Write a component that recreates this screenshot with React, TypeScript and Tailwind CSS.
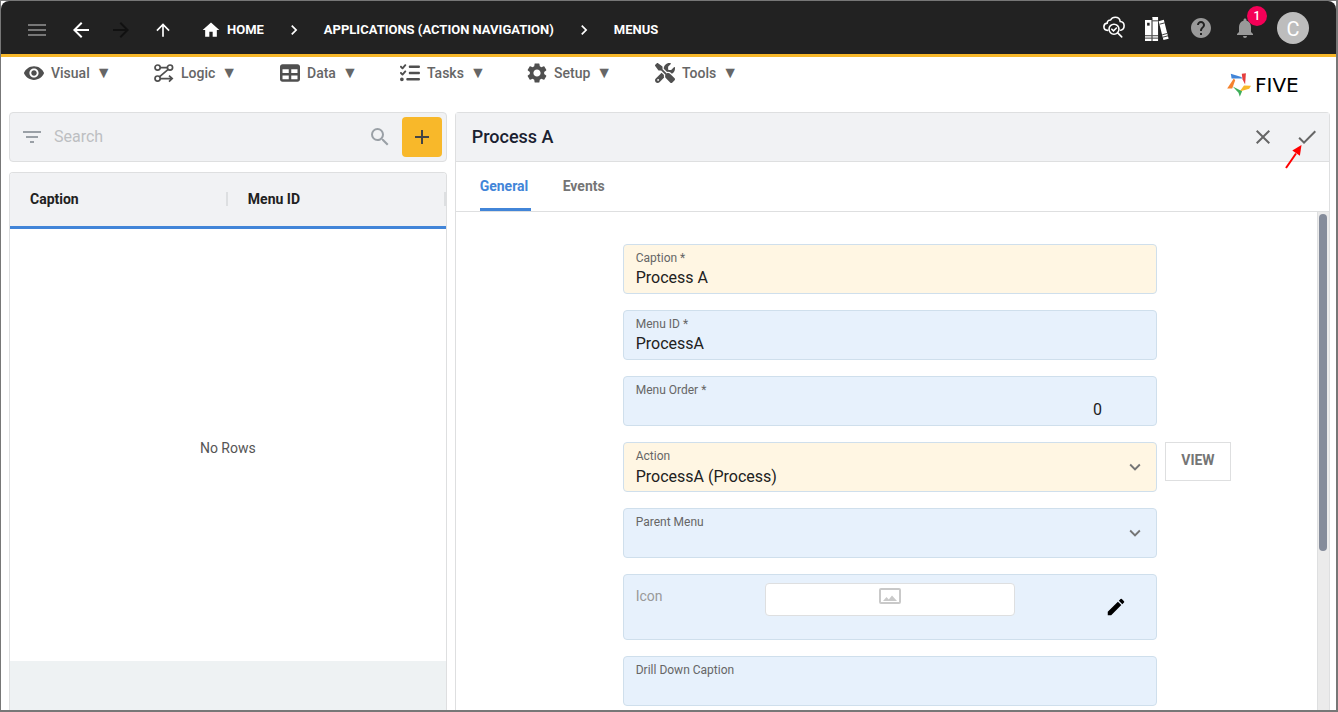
import { useState } from 'react'
import type { ReactNode } from 'react'
import {
  MdAdd,
  MdArrowBack,
  MdArrowForward,
  MdArrowUpward,
  MdCheck,
  MdChevronRight,
  MdClose,
  MdEdit,
  MdFilterList,
  MdHelp,
  MdHome,
  MdKeyboardArrowDown,
  MdMenu,
  MdNotifications,
  MdSearch,
  MdSettings,
  MdVisibility,
} from 'react-icons/md'
import { FaListCheck, FaScrewdriverWrench, FaTable } from 'react-icons/fa6'

const MENUS: { label: string; width: string; icon: ReactNode }[] = [
  { label: 'Visual', width: 'w-[130px]', icon: <MdVisibility size={22} /> },
  { label: 'Logic', width: 'w-[126px]', icon: <LogicIcon /> },
  { label: 'Data', width: 'w-[120px]', icon: <FaTable size={20} /> },
  { label: 'Tasks', width: 'w-[127px]', icon: <FaListCheck size={20} /> },
  { label: 'Setup', width: 'w-[128px]', icon: <MdSettings size={24} /> },
  { label: 'Tools', width: 'w-[126px]', icon: <FaScrewdriverWrench size={20} /> },
]

export default function App() {
  return (
    <div className="flex h-screen flex-col overflow-hidden border-t border-r-2 border-b-2 border-l border-[#777] bg-white font-[Roboto,sans-serif] text-[#212121]">
      <TopBar />
      <MenuBar />
      <main className="grid min-h-0 flex-1 grid-cols-[minmax(0,1fr)_minmax(0,2fr)] gap-2 pr-1.5 pl-2">
        <ListPanel />
        <FormPanel />
      </main>
    </div>
  )
}

function TopBar() {
  return (
    <header className="flex h-14 shrink-0 items-center justify-between rounded-t-lg border-b-3 border-[#f8b82a] bg-[#222] pr-[27px] pl-6 text-white">
      <nav className="flex items-center pt-1 text-[13px] font-bold" aria-label="Breadcrumb">
        <button aria-label="Menu" className="mr-5 text-[#777]">
          <MdMenu size={24} />
        </button>
        <button aria-label="Back" className="mr-4">
          <MdArrowBack size={24} />
        </button>
        <button aria-label="Forward" disabled className="mr-5 text-[#111]">
          <MdArrowForward size={24} />
        </button>
        <button aria-label="Up" className="mr-7">
          <MdArrowUpward size={20} />
        </button>
        <a href="#home" className="flex items-center gap-1.5">
          <MdHome size={20} />
          HOME
        </a>
        <MdChevronRight size={20} className="mx-5" />
        <a href="#applications">APPLICATIONS (ACTION NAVIGATION)</a>
        <MdChevronRight size={20} className="mx-5" />
        <a href="#menus">MENUS</a>
      </nav>
      <div className="flex items-center gap-5">
        <button aria-label="Inspect">
          <CloudIcon />
        </button>
        <button aria-label="Library" className="pt-0.5">
          <BooksIcon />
        </button>
        <button aria-label="Help" className="text-[#999]">
          <MdHelp size={24} />
        </button>
        <button aria-label="Notifications" className="relative text-[#999]">
          <MdNotifications size={24} />
          <span className="absolute -top-2.5 left-3.5 flex size-5 items-center justify-center rounded-full bg-[#f50057] text-xs font-medium text-white">
            1
          </span>
        </button>
        <button
          aria-label="Account"
          className="flex size-8 items-center justify-center rounded-full bg-[#bdbdbd] pt-0.5 text-xl text-white"
        >
          C
        </button>
      </div>
    </header>
  )
}

function MenuBar() {
  return (
    <div className="flex h-[55px] shrink-0 items-start justify-between px-[21px]">
      <nav className="flex pt-1" aria-label="Main">
        {MENUS.map((menu) => (
          <button
            key={menu.label}
            className={`flex h-6 items-center text-left text-sm font-medium text-[#666] ${menu.width}`}
          >
            <span className="mr-[5px] flex w-6 shrink-0 justify-center text-[#4f4f4f]">{menu.icon}</span>
            {menu.label}
            <span className="ml-1.5 text-base/6">▼</span>
          </button>
        ))}
      </nav>
      <div className="flex items-center gap-1 pt-4">
        <FiveMark />
        <span className="w-[60px] font-['DejaVu_Sans',sans-serif] text-xl/6 text-black">FIVE</span>
      </div>
    </div>
  )
}

function ListPanel() {
  return (
    <section className="flex min-h-0 flex-col">
      <div className="flex h-[50px] shrink-0 items-center rounded border border-[#dedfe0] bg-[#f1f2f4] pr-1 pl-2.5 text-[#9aa0a6]">
        <button aria-label="Filter">
          <MdFilterList size={24} />
        </button>
        <input
          type="search"
          aria-label="Search"
          placeholder="Search"
          className="ml-2.5 min-w-0 flex-1 text-base outline-none placeholder:text-[#bdbfc2]"
        />
        <MdSearch size={24} className="mr-2.5" />
        <button
          aria-label="Add"
          className="flex size-10 items-center justify-center rounded bg-[#f8b82a] text-[#444]"
        >
          <MdAdd size={24} />
        </button>
      </div>
      <div className="mt-2.5 flex min-h-0 flex-1 flex-col overflow-hidden rounded-t border border-b-0 border-[#dedfe0]">
        <div className="min-h-0 flex-1">
          <table className="h-full w-full table-fixed text-sm">
            <thead>
              <tr className="h-[54px] border-b-3 border-[#4285d8] bg-[#f1f2f4] text-left">
                <HeadCell>Caption</HeadCell>
                <HeadCell>Menu ID</HeadCell>
              </tr>
            </thead>
            <tbody>
              <tr>
                <td colSpan={2} className="pt-1.5 text-center text-[#555]">
                  No Rows
                </td>
              </tr>
            </tbody>
          </table>
        </div>
        <div className="h-[49px] shrink-0 bg-[#eef2f3]" />
      </div>
    </section>
  )
}

function HeadCell({ children }: { children: ReactNode }) {
  return (
    <th className="p-0 pl-5 font-bold">
      <span className="flex items-center justify-between">
        {children}
        <span className="h-3.5 w-0.5 bg-[#dddfe1]" />
      </span>
    </th>
  )
}

function FormPanel() {
  const [tab, setTab] = useState('General')

  return (
    <section className="flex min-h-0 flex-col rounded-t border border-b-0 border-[#dedfe0]">
      <div className="flex h-[49px] shrink-0 items-center justify-between border-b border-[#dedfe0] bg-[#f1f2f4] pr-2.5 pl-4 text-[#666]">
        <h1 className="text-lg font-medium text-[#1a2130]">Process A</h1>
        <div className="flex gap-5">
          <button aria-label="Cancel">
            <MdClose size={24} />
          </button>
          <button aria-label="Save" className="relative">
            <MdCheck size={24} />
            <PointerArrow />
          </button>
        </div>
      </div>
      <div role="tablist" className="flex h-[50px] shrink-0 gap-8 border-b border-[#dedfe0] px-6">
        {['General', 'Events'].map((name) => (
          <button
            key={name}
            role="tab"
            aria-selected={tab === name}
            onClick={() => setTab(name)}
            className={`min-w-[51px] border-b-3 pt-0.5 text-left text-sm font-bold ${
              tab === name ? 'border-[#4285d8] text-[#4285d8]' : 'border-transparent text-[#757575]'
            }`}
          >
            {name}
          </button>
        ))}
      </div>
      <div className="flex min-h-0 flex-1">
        <form className="min-w-0 flex-1 space-y-4 overflow-hidden pt-8">
          <TextField id="caption" label="Caption *" value="Process A" filled />
          <TextField id="menu-id" label="Menu ID *" value="ProcessA" />
          <TextField id="menu-order" label="Menu Order *" value="0" numeric />
          <SelectField
            id="action"
            label="Action"
            value="ProcessA (Process)"
            filled
            side={
              <button
                type="button"
                className="ml-2 h-[39px] w-[66px] border border-[#dedfe0] pb-1 text-sm font-bold text-[#757575]"
              >
                VIEW
              </button>
            }
          />
          <SelectField id="parent-menu" label="Parent Menu" value="" />
          <Row>
            <div className="flex h-[66px] justify-between rounded border border-[#cfdfec] bg-[#e7f1fc] pt-2 pr-[29px] pl-3">
              <span className="w-[129px] pt-[3px] text-sm text-[#999]">Icon</span>
              <div className="flex h-[33px] w-[250px] justify-center rounded border border-[#dedfe0] bg-white pt-1">
                <PictureIcon />
              </div>
              <button type="button" aria-label="Edit icon" className="ml-auto h-12 text-black">
                <MdEdit size={22} />
              </button>
            </div>
          </Row>
          <TextField id="drill-down" label="Drill Down Caption" value="" />
        </form>
        <div className="w-3 shrink-0 border-l border-[#dedfe0] bg-[#ebebeb] px-px pt-0.5">
          <div className="h-[68%] w-2 rounded-full bg-[#858c9b]" />
        </div>
      </div>
    </section>
  )
}

function Row({ children, side }: { children: ReactNode; side?: ReactNode }) {
  return (
    <div className="grid grid-cols-[167fr_534fr_160fr]">
      <div className="col-start-2 min-w-0">{children}</div>
      {side && <div>{side}</div>}
    </div>
  )
}

interface FieldProps {
  id: string
  label: string
  value: string
  filled?: boolean
}

function TextField({ id, label, value, filled, numeric }: FieldProps & { numeric?: boolean }) {
  return (
    <Row>
      <div
        className={`flex h-[50px] flex-col rounded border border-[#cfdfec] px-3 pt-[5px] ${
          filled ? 'bg-[#fff6e3]' : 'bg-[#e7f1fc]'
        }`}
      >
        <label htmlFor={id} className="text-xs/4 text-[#666]">
          {label}
        </label>
        <input
          id={id}
          defaultValue={value}
          inputMode={numeric ? 'numeric' : 'text'}
          className={`h-6 w-full text-base outline-none ${numeric ? 'pr-[42px] text-right' : ''}`}
        />
      </div>
    </Row>
  )
}

function SelectField({ id, label, value, filled, side }: FieldProps & { side?: ReactNode }) {
  return (
    <Row side={side}>
      <div
        className={`flex h-[50px] items-center rounded border border-[#cfdfec] pr-2.5 pl-3 ${
          filled ? 'bg-[#fff6e3]' : 'bg-[#e7f1fc]'
        }`}
      >
        <div className="flex min-w-0 flex-1 flex-col pt-1">
          <label htmlFor={id} className="text-xs/4 text-[#666]">
            {label}
          </label>
          <select id={id} className="h-[26px] w-full appearance-none text-base outline-none">
            <option>{value}</option>
          </select>
        </div>
        <MdKeyboardArrowDown size={22} className="pointer-events-none text-[#757575]" />
      </div>
    </Row>
  )
}

function LogicIcon() {
  return (
    <svg width="20" height="20" viewBox="0 0 20 20" fill="none" stroke="currentColor" strokeWidth="1.7">
      <circle cx="3.6" cy="4.6" r="2.6" />
      <circle cx="16" cy="4.6" r="2.6" />
      <circle cx="3.6" cy="15.6" r="2.6" />
      <path d="M6 4.600h7.500M14.200 6.400 5.400 13.800M6 15.600h12M15 12.600l3.200 3-3.200 3" />
    </svg>
  )
}

function CloudIcon() {
  return (
    <svg width="22" height="24" viewBox="0 0 22 24" fill="none" stroke="white" strokeWidth="1.6" strokeLinecap="round">
      <path d="M4.600 14.400C2.400 14.200.9 12.600.9 10.700c0-2 1.300-3.400 3.300-3.600C4.300 5 5.600 3.900 7.600 4c.9-1.700 2.600-2.700 4.600-2.700 2.700 0 4.700 1.700 5 4.200 2.200.2 3.900 1.800 3.900 4.200 0 2.300-1.300 4-3.300 4.500" />
      <circle cx="11" cy="13.200" r="5" />
      <path d="m8.800 13.200 1.700 1.700 2.900-2.900M14.700 16.900l4 4" />
    </svg>
  )
}

function BooksIcon() {
  return (
    <svg width="24" height="24" viewBox="0 0 25 25" fill="white">
      <path d="M0 3h7v22H0zM7.600 0h6v25h-6z" />
      <path d="m14.200 4.300 5.400-1.400 5 19.700-5.400 1.400z" />
      <path
        d="M0 19.500h7M0 22h7M7.600 4h6M7.600 19.500h6M7.600 22h6M15.200 7.500l5.400-1.400M18 18.500l5.400-1.400M18.600 21l5.400-1.400"
        stroke="#222"
        strokeWidth="0.9"
      />
      <path d="M2.200 6h2.600v3H2.200z" fill="#222" />
      <path d="M7.300 1v24" stroke="#222" strokeWidth="0.6" />
    </svg>
  )
}

function FiveMark() {
  return (
    <svg width="24" height="24" viewBox="0 0 24 24">
      <path d="M3.800.8 14.400 4l.8 1.500H4.600z" fill="#4285d8" />
      <path d="M14.800.8 18.900.2l-.8 11.300-2.600-5.300z" fill="#e53e3e" />
      <path d="m17 12.600 7 .2-1.800 2.900-9.600 2.800z" fill="#f8b82a" />
      <path d="m5.700 13.400 9.400 4.800-2.300 5.600-1.300-4z" fill="#3fae5a" />
      <path d="m6.800 5.600 1.400 1.600-3 8.400H.2z" fill="#f5822d" />
    </svg>
  )
}

function PictureIcon() {
  return (
    <svg width="22" height="16" viewBox="0 0 22 16" fill="none">
      <rect x="1" y="1" width="20" height="14" rx="1" stroke="#c9c9c9" strokeWidth="2" />
      <path d="M4 13l3.500-4 2.300 2.400L13 7.500 18 13z" fill="#c9c9c9" />
    </svg>
  )
}

// Red callout pointing at the save tick
function PointerArrow() {
  return (
    <svg width="18" height="24" viewBox="0 0 18 24" className="pointer-events-none absolute top-5 -left-2.5">
      <path d="M1 23 11 8.500" stroke="#f00" strokeWidth="2" />
      <path d="M16.500 0 14.900 10.800 7.300 5.600z" fill="#f00" />
    </svg>
  )
}
